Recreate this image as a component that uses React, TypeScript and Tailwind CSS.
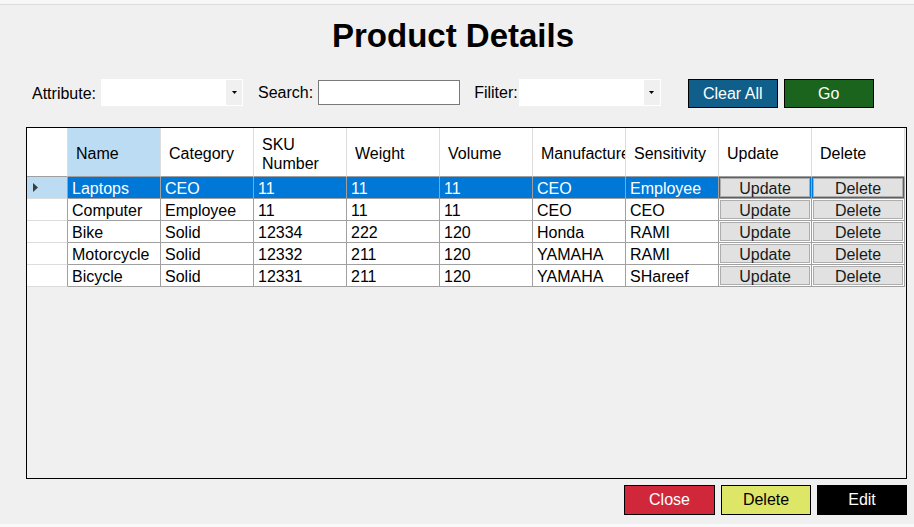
const columns = ["Name", "Category", "SKU Number", "Weight", "Volume", "Manufacturer", "Sensitivity", "Update", "Delete"];

const rows = [
  ["Laptops", "CEO", "11", "11", "11", "CEO", "Employee"],
  ["Computer", "Employee", "11", "11", "11", "CEO", "CEO"],
  ["Bike", "Solid", "12334", "222", "120", "Honda", "RAMI"],
  ["Motorcycle", "Solid", "12332", "211", "120", "YAMAHA", "RAMI"],
  ["Bicycle", "Solid", "12331", "211", "120", "YAMAHA", "SHareef"],
];

function ComboBox() {
  return (
    <div className="flex h-[27px] w-[142px] border border-white bg-white">
      <div className="flex-1" />
      <div className="flex w-[16px] items-center justify-center bg-[#f0f0f0]">
        <svg width="5" height="3" viewBox="0 0 5 3">
          <path d="M0 0h5L2.5 3z" fill="#000" />
        </svg>
      </div>
    </div>
  );
}

function Label({ text }: { text: string }) {
  return <span className="h-[27px] pt-px text-[16px] leading-[27px] text-black">{text}</span>;
}

export default function App() {
  return (
    <div className="flex h-[527px] w-[914px] flex-col overflow-hidden bg-[#f0f0f0] font-['Liberation_Sans',Arial,sans-serif]">
      <div className="h-[4px] bg-[#f7f7f7]" />
      <div className="h-px bg-[#dcdcdc]" />

      {/* Title */}
      <h1 className="mt-[14px] h-[33px] pr-[8px] text-center text-[33px] font-bold leading-[33px] text-black">Product Details</h1>

      {/* Filter row */}
      <div className="mt-[27px] flex h-[29px] items-start pl-[32px]">
        <Label text="Attribute:" />
        <div className="ml-[5px]"><ComboBox /></div>
        <div className="ml-[15px]"><Label text="Search:" /></div>
        <input className="ml-[5px] mt-px h-[25px] w-[142px] border border-[#7a7a7a] bg-white outline-none" />
        <div className="ml-[14px]"><Label text="Filiter:" /></div>
        <div className="ml-px"><ComboBox /></div>
        <button className="ml-[27px] h-[29px] w-[90px] border border-black bg-[#0f5f8a] pt-px text-[16px] text-white">Clear All</button>
        <button className="ml-[6px] h-[29px] w-[90px] border border-black bg-[#1b641d] pt-px text-[16px] text-white">Go</button>
      </div>

      {/* Data grid */}
      <div className="mx-[26px] mt-[19px] h-[352px] w-[881px] border border-black">
        <div className="grid grid-cols-[41px_repeat(9,93px)] text-[16px] text-black">
          {/* header */}
          <div className="h-[49px] border-b border-r border-b-[#a0a0a0] border-r-[#dcdcdc] bg-white" />
          {columns.map((c, i) => (
            <div
              key={c}
              className={`flex h-[49px] items-center overflow-hidden whitespace-nowrap border-b border-r border-b-[#a0a0a0] border-r-[#dcdcdc] pl-[8px] pt-[3px] ${i === 0 ? "bg-[#bcdcf4]" : "bg-white"}`}
            >
              {c === "SKU Number" ? (
                <span className="leading-[19px]">SKU<br />Number</span>
              ) : (
                <span>{c}</span>
              )}
            </div>
          ))}

          {/* body */}
          {rows.map((r, ri) => {
            const sel = ri === 0;
            return [
              <div
                key={`h${ri}`}
                className={`flex h-[22px] items-center border-b border-r border-b-[#dcdcdc] border-r-[#a0a0a0] pl-[6px] ${sel ? "bg-[#bcdcf4]" : "bg-white"}`}
              >
                {sel && (
                  <svg width="5" height="9" viewBox="0 0 5 9">
                    <path d="M0 0L5 4.5L0 9z" fill="#3c3c3c" />
                  </svg>
                )}
              </div>,
              ...r.map((v, ci) => (
                <div
                  key={`c${ri}-${ci}`}
                  className={`h-[22px] overflow-hidden whitespace-nowrap border-b border-r border-[#a0a0a0] pl-[4px] pt-px leading-[21px] ${sel ? "bg-[#0078d7] text-white" : "bg-white text-black"}`}
                >
                  {v}
                </div>
              )),
              ...["Update", "Delete"].map((b) => (
                <div
                  key={`b${ri}-${b}`}
                  className={`h-[22px] border-b border-r border-[#a0a0a0] p-px ${sel ? "bg-[#0078d7]" : "bg-white"}`}
                >
                  <div className="flex h-full items-center justify-center border border-[#adadad] bg-[#e1e1e1] pt-[2px] text-[16px] leading-none text-[#1a1a1a]">
                    {b}
                  </div>
                </div>
              )),
            ];
          })}
        </div>
      </div>

      {/* Bottom buttons */}
      <div className="mt-[6px] flex justify-end gap-[6px] pr-[7px]">
        <button className="h-[30px] w-[91px] border border-black bg-[#d0273a] text-[16px] text-white">Close</button>
        <button className="h-[30px] w-[90px] border border-black bg-[#dde666] text-[16px] text-black">Delete</button>
        <button className="h-[30px] w-[90px] bg-black text-[16px] text-white">Edit</button>
      </div>

      <div className="mt-auto h-[3px] bg-[#f9f9f9]" />
    </div>
  );
}
